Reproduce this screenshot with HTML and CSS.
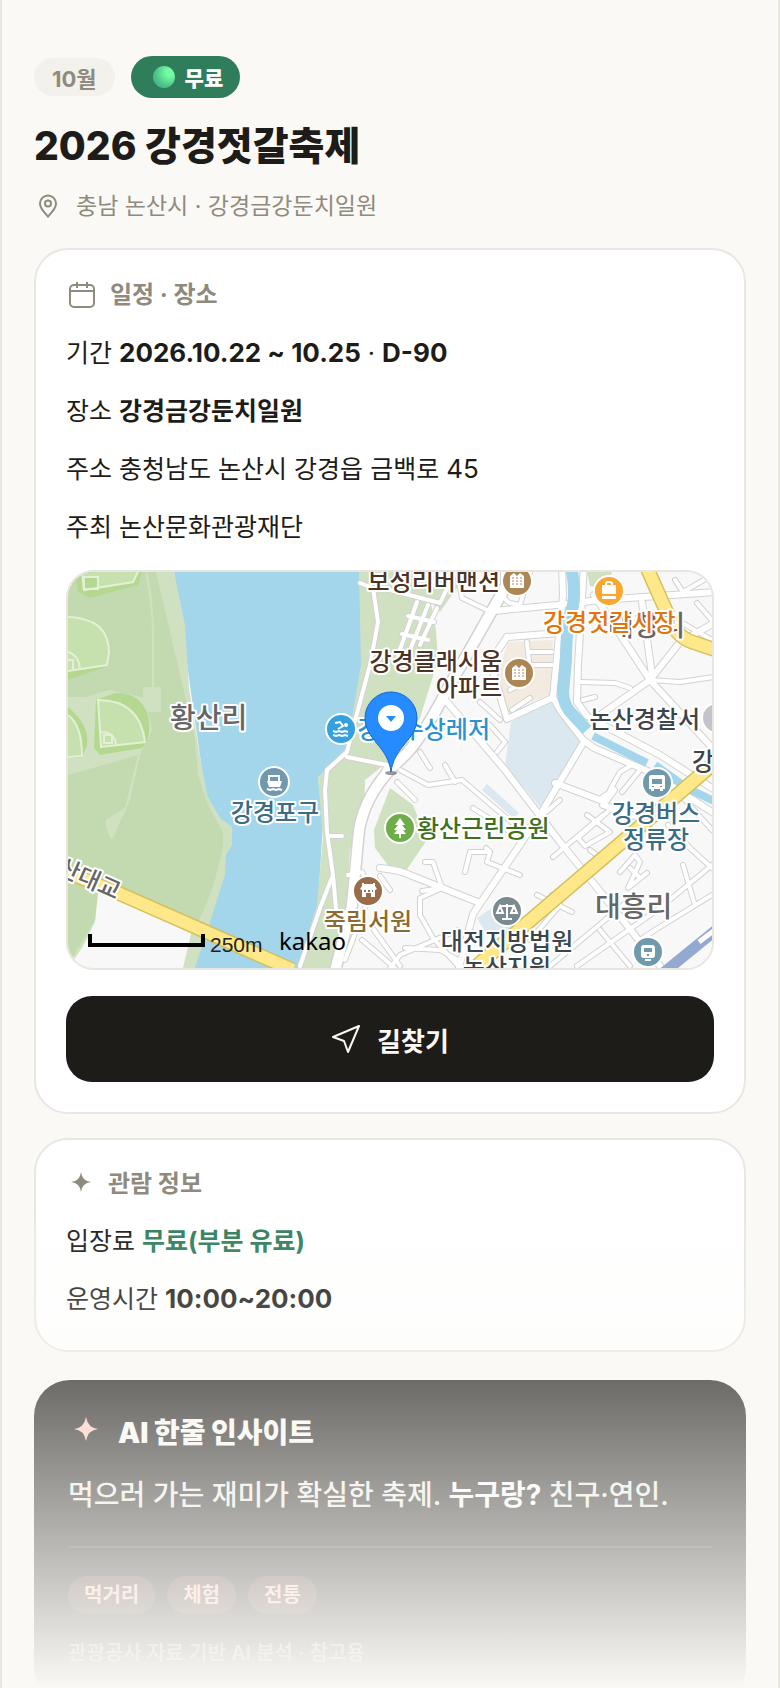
FILE: index.html
```html
<!DOCTYPE html>
<html lang="ko">
<head>
<meta charset="utf-8">
<meta name="viewport" content="width=device-width, initial-scale=1">
<title>2026 강경젓갈축제</title>
<link rel="stylesheet" href="styles.css">
</head>
<body>
<main class="page">
  <header class="intro">
    <div class="tags">
      <span class="tag tag-month">10월</span>
      <span class="tag tag-free"><i class="orb"></i>무료</span>
    </div>
    <h1 class="title">2026 강경젓갈축제</h1>
    <p class="place">
      <svg class="icon-pin" viewBox="0 0 24 24" aria-hidden="true"><path d="M12 22.500C9 19 4 15 4 9.500a8 8 0 0 1 16 0c0 5.500-5 9.500-8 13z"/><circle cx="12" cy="9.500" r="3"/></svg>
      충남 논산시 · 강경금강둔치일원
    </p>
  </header>

  <section class="card">
    <h2 class="card-title">
      <svg class="icon-calendar" viewBox="0 0 30 30" aria-hidden="true"><rect x="4" y="5" width="24" height="22" rx="4"/><path d="M4 11h24M11 2v6M21 2v6"/></svg>
      일정 · 장소
    </h2>
    <p class="row">기간 <b class="num">2026.10.22 ~ 10.25</b> · <b class="num">D-90</b></p>
    <p class="row">장소 <b>강경금강둔치일원</b></p>
    <p class="row">주소 충청남도 논산시 강경읍 금백로 <span class="num">45</span></p>
    <p class="row">주최 논산문화관광재단</p>

    <div class="map">
      <svg class="map-canvas" viewBox="68 572 644 396" preserveAspectRatio="xMidYMid slice" role="img" aria-label="강경금강둔치일원 지도">
        <defs>
          <g id="lanes">
            <path d="M562 565L563 595 553 697 560 710 583 740 594 748 650 772 712 812"/>
            <path d="M584 565L578 665 577 702 587 716 603 725 660 755 715 790"/>
            <path d="M493 611L557 605 600 600 716 592"/>
            <path d="M594 595L650 680 716 752"/>
            <path d="M650 680L680 642 716 622M642 602L652 675M650 680L596 718"/>
            <path d="M447 702L505 770 560 842 603 895 637 938 665 972"/>
            <path d="M582 745L540 815 473 914 458 972"/>
            <path d="M380 868Q400 870 410 875L480 903"/>
            <path d="M507 637L560 633M507 637L490 662 507 719 552 698"/>
            <path d="M555 783L600 800 614 790 603 805 640 818"/>
          </g>
          <g id="alleys">
            <path d="M360 583L373 588 378 622 370 665 353 728 347 752 327 770 325 790 327 832 333 875 337 920"/>
            <path d="M333 875L320 908 300 966M347 757L387 765M329 836H342M387 765L357 830"/>
            <path d="M390 590L440 603 455 572M417 602L398 655M428 605L408 655M437 608L420 645M408 616L434 622M402 634L428 640"/>
            <path d="M457 572L462 598 487 610M503 572V590Q503 600 510 603L520 605 530 572"/>
            <path d="M527 642L530 672M533 665H552M530 652H552M510 690L524 682M480 702L500 720M512 710L530 698"/>
            <path d="M580 682L615 683 630 688M650 680L680 682 714 677M583 700L595 697"/>
            <path d="M683 592L716 573M683 592L675 580M697 603L716 625M712 640L660 610"/>
            <path d="M553 857L603 815M587 815L610 832 585 846 578 838 612 808M590 850L606 862"/>
            <path d="M465 872L470 852 490 852 487 862 520 875M490 852L486 848"/>
            <path d="M425 862L433 862 442 888 422 891M442 888L420 898 420 915 433 938 458 966"/>
            <path d="M390 968L400 955 458 930M405 948L440 950 458 960"/>
            <path d="M397 782L415 800M420 752L430 768M400 770L428 785 462 780 523 832 560 800M473 808L515 835M455 782L445 765"/>
            <path d="M537 895L572 912M560 903L552 895M550 966L635 895M577 966L660 908 712 865"/>
            <path d="M668 825L692 850 712 868M683 865L694 902M600 930L630 966"/>
            <path d="M620 872L635 855 640 862 628 888 647 873M630 868L640 878"/>
            <path d="M610 790L620 772 632 765M622 792L640 770M685 800L712 830"/>
            <path d="M348 875L362 872 366 880M366 905L345 960M380 876L390 890M362 940L395 968M374 930L400 966"/>
            <path d="M640 940L655 930 712 895M530 940L560 905M490 725L505 742 497 752"/>
          </g>
          <path id="main-road" d="M515 570L447 690Q420 742 402 758 366 790 359 830L352 905 334 975"/>
        </defs>

        <rect class="ground" x="68" y="572" width="644" height="396"/>
        <path class="water" d="M174 572H360L364 640 358 700 350 745 330 765 318 778 323 822 318 905 297 968H195L202 770z"/>
        <path class="grass" d="M68 572H174L185 625 189 688 198 745 207 795 220 818 232 827V845L226 855 225 875 210 922 195 968H68z"/>
        <path class="meadow" d="M68 572H156L195 738 198 775 208 805 223 832V848L215 880 208 900 195 930 98 893V915L68 965z"/>
        <path class="ground" d="M98 893L95 922 82 948 68 968H183L192 930z"/>
        <path class="grass" d="M68 697L85 697 110 690 145 698 152 730 140 755 130 800 112 840Q105 830 106 820L125 808 138 755 68 775z"/>
        <path class="grass" d="M143 687H161V712H143z"/>
        <path class="grass" d="M359 572H425L436 630 438 660 420 718 390 760 365 780 364 820 350 850 345 925 338 935 330 968H297L317 905 323 838 318 778 347 747 361 665z"/>
        <path class="grass" d="M390 788L413 805 427 840 405 872 390 868 375 848 374 830z"/>
        <path class="grass" d="M450 572H468L440 612 425 595zM587 572H612L607 588 590 586z"/>
        <path class="field" d="M75 572L78 592 90 598 138 585 142 572zM68 618Q105 612 108 650L106 667 68 680zM68 707Q90 725 87 745L82 758H68zM96 700L115 693Q140 692 148 715 152 740 142 748L100 755 94 748z"/>
        <path class="diamond" d="M82 572L84 590 133 582 138 572M68 617Q108 618 109 652L107 665 68 671M68 715Q82 725 82 756L68 757M98 700Q140 700 145 742L101 747zM101 732Q115 732 116 745M104 735h8v8h-8zM84 577h14v12h-14zM68 652Q79 655 80 670M68 660h5v10"/>
        <path class="track" d="M146 572Q153 600 153 640V687"/>
        <path class="plot" d="M511 722L550 700 583 742 540 807 505 765z"/>
        <path class="plot" d="M487 784L519 813 513 818 482 790zM477 918L493 907 515 928 487 935z"/>
        <path class="estate" d="M508 642L553 640 551 694 507 712 496 680z"/>

        <use class="casing alley" href="#alleys"/>
        <use class="casing lane" href="#lanes"/>
        <use class="casing trunk" href="#main-road"/>
        <use class="alley" href="#alleys"/>
        <use class="lane" href="#lanes"/>
        <use class="trunk" href="#main-road"/>

        <path class="canal" d="M571 566Q576 590 573 605 566 625 566 660L563 692Q563 706 574 716L587 730"/>
        <path class="canal canal-thin" d="M593 736L647 763M655 765L687 788 716 802"/>
        <path class="highway-edge" d="M62 870L118 893 293 970M472 970L718 760M647 568L668 615Q675 636 692 642L716 650"/>
        <path class="highway" d="M62 870L118 893 293 970M472 970L718 760M647 568L668 615Q675 636 692 642L716 650"/>
        <path class="rail" d="M662 974L716 930"/>
        <path class="rail-gap" d="M699 942L716 929"/>

        <g class="poi">
          <circle class="poi-swim" cx="341" cy="729" r="15"/>
          <circle class="poi-transit" cx="274" cy="782" r="15"/>
          <circle class="poi-hanok" cx="368" cy="891" r="15"/>
          <circle class="poi-park" cx="400" cy="828" r="15"/>
          <circle class="poi-court" cx="507" cy="911" r="15"/>
          <circle class="poi-transit" cx="657" cy="783" r="15"/>
          <circle class="poi-transit" cx="648" cy="952" r="15"/>
          <circle class="poi-home" cx="517" cy="581" r="15"/>
          <circle class="poi-home" cx="519" cy="673" r="15"/>
          <circle class="poi-market" cx="609" cy="591" r="15"/>
          <circle class="poi-police" cx="717" cy="718" r="15"/>
        </g>
        <g class="glyph">
          <path d="M510 588V576l4-3 3 3 3-3 4 3v12zM512 680V668l4-3 3 3 3-3 4 3v12z"/>
          <path class="windows-home" d="M512 578h10M512 581h10M512 584h10M514 670h10M514 673h10M514 676h10"/>
          <path d="M602 585h14v9h-14zM602 596h14v3h-14z"/>
          <path class="line" d="M606 585v-1q0-2 2-2h2q2 0 2 2v1"/>
          <circle cx="346" cy="725" r="2"/>
          <path class="line" d="M335 723l5-1 3 4-5 3M333 731l3 1 3-1 3 1 3-1 3 1M333 735l3 1 3-1 3 1 3-1 3 1"/>
          <path d="M267 781h15l-2 6h-11z"/>
          <path class="line" d="M269 781v-5h10v5M272 776h5M267 789l3 1 3-1 3 1 3-1 3 1"/>
          <path d="M360 889l2-3v-3h2v1h9v-1h2v3l2 3-2 1v7h-4v-4h-5v4h-4v-7z"/>
          <path class="door" d="M364 890h2v2h-2zM368 890h2v2h-2zM372 890h1v2h-1z"/>
          <path d="M400 818l5 7h-3l4 5h-3l3 4h-5v4h-2v-4h-5l3-4h-3l4-5h-3z"/>
          <path class="line" d="M507 904v14M502 919h10M500 906h14M500 906l-3 7h6zM514 906l-3 7h6z"/>
          <path d="M651 775h12q2 0 2 2v12h-2v2h-3v-2h-6v2h-3v-2h-2v-12q0-2 2-2z"/>
          <path class="cut" d="M652 779h10v5h-10zM652 786h2v1h-2zM660 786h2v1h-2z"/>
          <path d="M644 945h8q3 0 3 3v7q0 3-3 3h-8q-3 0-3-3v-7q0-3 3-3zM645 959h6v2h-6z"/>
          <path class="cut" d="M644 948h8v4h-8zM647 954h2v2h-2z"/>
        </g>

        <g class="label">
          <text class="label-area" x="170" y="728">황산리</text>
          <text class="label-area" x="595" y="917">대흥리</text>
          <text class="label-area" x="608" y="636">대창리</text>
          <text class="label-home end" x="500" y="590">보성리버맨션</text>
          <text class="label-home end" x="502" y="670">강경클래시움</text>
          <text class="label-home end" x="502" y="696">아파트</text>
          <text class="label-market" x="543" y="631">강경젓갈시장</text>
          <text class="label-swim end" x="490" y="738">강경수상레저</text>
          <text class="label-transit mid" x="275" y="821">강경포구</text>
          <text class="label-park" x="417" y="837">황산근린공원</text>
          <text class="label-hanok mid" x="368" y="930">죽림서원</text>
          <text class="label-office mid" x="507" y="950">대전지방법원</text>
          <text class="label-office mid" x="507" y="976">논산지원</text>
          <text class="label-transit mid" x="656" y="822">강경버스</text>
          <text class="label-transit mid" x="656" y="848">정류장</text>
          <text class="label-office end" x="700" y="728">논산경찰서</text>
          <text class="label-office" x="692" y="770">강경</text>
          <text class="label-bridge end" x="116" y="900" transform="rotate(24 116 900)">황산대교</text>
        </g>

        <ellipse class="pin-shadow" cx="391" cy="773" rx="6" ry="2"/>
        <path class="pin" d="M391 772C388 746 365 740 365 718a26 26 0 0 1 52 0C417 740 394 746 391 772z"/>
        <circle class="pin-hole" cx="391" cy="718" r="13"/>
        <path class="pin-arrow" d="M386 716h10l-5 6z"/>

        <path class="scale" d="M90 934V945H203V934"/>
        <text class="scale-text" x="210" y="952">250m</text>
        <text class="brand" x="279" y="950">kakao</text>
      </svg>
    </div>

    <button class="route" type="button">
      <svg class="icon-route" viewBox="0 0 30 30" aria-hidden="true"><path d="M28 2L2 13l11 4 4 11z"/></svg>
      길찾기
    </button>
  </section>

  <section class="card">
    <h2 class="card-title">
      <svg class="icon-spark" viewBox="0 0 28 28" aria-hidden="true"><path d="M15 2Q16 11 25 12 16 13 15 22 14 13 5 12 14 11 15 2z"/></svg>
      관람 정보
    </h2>
    <p class="row">입장료 <b class="free">무료(부분 유료)</b></p>
    <p class="row">운영시간 <b class="num">10:00~20:00</b></p>
  </section>

  <section class="insight">
    <h2 class="insight-title">
      <svg class="icon-insight" viewBox="0 0 28 28" aria-hidden="true"><path d="M14 0Q16 11 26 12 16 13 14 24 12 13 2 12 12 11 14 0z"/></svg>
      AI 한줄 인사이트
    </h2>
    <p class="insight-text">먹으러 가는 재미가 확실한 축제. <b>누구랑?</b> 친구·연인.</p>
    <ul class="topics">
      <li class="topic">먹거리</li>
      <li class="topic">체험</li>
      <li class="topic">전통</li>
    </ul>
    <p class="source">관광공사 자료 기반 AI 분석 · 참고용</p>
  </section>
  <div class="fade"></div>
</main>
</body>
</html>
```
FILE: styles.css
```css
* { box-sizing: border-box; }

body {
  margin: 0;
  background: #faf9f5;
  color: #1d1c18;
  font-family: Inter, "Noto Sans CJK KR", sans-serif;
}

h1, h2, p, ul { margin: 0; padding: 0; }

.page {
  position: relative;
  height: 100vh;
  overflow: hidden;
  padding: 56px 32px 0;
  border: solid #e9e7e0;
  border-width: 0 2px;
}

/* header */
.tags { display: flex; align-items: center; gap: 16px; }
.tag { display: flex; align-items: center; border-radius: 24px; font-size: 22px; font-weight: 700; }
.tag-month { height: 38px; padding: 0 18px; background: #f2f1ec; color: #8f8a7e; }
.tag-free { height: 42px; gap: 10px; padding: 0 17px 0 22px; background: #2f7d5b; color: #fff; font-size: 21px; font-weight: 900; }
.orb { width: 22px; height: 22px; border-radius: 50%; background: radial-gradient(circle at 75% 30%, #74fca0 15%, #4fc389 60%, #4a9c95 100%); }
.title { margin-top: 20px; font-size: 39px; line-height: 56px; font-weight: 800; }
.place { display: flex; align-items: center; gap: 14px; margin-top: 14px; font-size: 23px; line-height: 36px; color: #8f8a7e; }
.icon-pin { width: 28px; height: 24px; fill: none; stroke: #8f8a7e; stroke-width: 2; }

/* cards */
.card {
  margin-top: 24px;
  padding: 24px 30px 30px;
  border: 2px solid #e9e7e0;
  border-radius: 34px;
  background: #fff;
}
.card-title { display: flex; align-items: center; gap: 14px; min-height: 40px; font-size: 24px; line-height: 40px; font-weight: 700; color: #8f8a7e; }
.icon-calendar { width: 30px; height: 42px; padding: 6px 0; fill: none; stroke: #8f8a7e; stroke-width: 2; }
.icon-spark { width: 28px; height: 28px; fill: #8f8a7e; }
.row { margin-top: 16px; font-size: 25px; line-height: 42px; }
.row b { font-weight: 700; }
.row .num { font-size: 26px; }
.row .free { color: #2f7d5b; }

/* map */
.map { margin-top: 22px; border: 2px solid #e9e5df; border-radius: 28px; overflow: hidden; }
.map-canvas { display: block; width: 100%; height: 396px; }
.ground { fill: #f8f8f8; }
.water { fill: #a3d5eb; }
.grass { fill: #d0e1c2; }
.meadow { fill: #c3dab0; }
.field { fill: #b5d891; }
.diamond { fill: #c6e0ae; stroke: #e4f0d6; stroke-width: 2; }
.track { fill: none; stroke: #d0e1c2; stroke-width: 2; }
.plot { fill: #dce8f0; }
.estate { fill: #f3ebe0; }
.alley, .lane, .trunk { fill: none; stroke: #fff; stroke-linecap: round; stroke-linejoin: round; }
.alley { stroke-width: 4; }
.lane { stroke-width: 6; }
.trunk { stroke-width: 10; }
.casing { stroke: #d2d2d2; }
.casing.alley { stroke-width: 6; }
.casing.lane { stroke-width: 8; }
.casing.trunk { stroke-width: 13; }
.canal { fill: none; stroke: #a3d5eb; stroke-width: 12; }
.canal-thin { stroke-width: 8; }
.highway-edge, .highway { fill: none; stroke: #d4c05c; stroke-width: 15; }
.highway { stroke: #ffe88a; stroke-width: 12; }
.rail { fill: none; stroke: #94a9cf; stroke-width: 11; }
.rail-gap { stroke: #fff; stroke-width: 5; }
.poi { stroke: #fff; stroke-width: 2; }
.poi-swim { fill: #35a0e0; }
.poi-transit { fill: #7099ad; }
.poi-hanok { fill: #9a6c4a; }
.poi-park { fill: #6fad4a; }
.poi-court { fill: #7b8990; }
.poi-home { fill: #ad8655; }
.poi-market { fill: #fba62f; }
.poi-police { fill: #c3c3cb; }
.glyph { fill: #fff; }
.line { fill: none; stroke: #fff; stroke-width: 2; }
.windows-home { fill: none; stroke: #ad8655; stroke-width: 1; stroke-dasharray: 2 2; }
.door { fill: #9a6c4a; }
.cut { fill: #7099ad; }
.label { font-family: "Noto Sans CJK KR", sans-serif; font-size: 24px; font-weight: 500; paint-order: stroke; stroke: #fff; stroke-width: 4; stroke-linejoin: round; }
.end { text-anchor: end; }
.mid { text-anchor: middle; }
.label-area { font-size: 28px; fill: #666; }
.label-home { fill: #4b3426; }
.label-market { fill: #e5730c; }
.label-swim { fill: #2c93d0; }
.label-transit { fill: #396c87; }
.label-park { fill: #3f7020; }
.label-hanok { fill: #8c6a34; }
.label-office { fill: #3b454c; }
.label-bridge { font-size: 24px; fill: #666; }
.pin-shadow { fill: #555; opacity: .6; }
.pin { fill: #258bff; stroke: #1468cf; stroke-width: 1; }
.pin-hole { fill: #fff; }
.pin-arrow { fill: #258bff; }
.scale { fill: none; stroke: #000; stroke-width: 4; }
.scale-text { font-family: "Liberation Sans", sans-serif; font-size: 21px; fill: #222; }
.brand { font-family: "Noto Sans", sans-serif; font-size: 24px; font-weight: 400; fill: #000; }

.route {
  display: flex;
  align-items: center;
  justify-content: center;
  gap: 16px;
  width: 100%;
  height: 86px;
  margin-top: 26px;
  border: 0;
  border-radius: 26px;
  background: #1d1c18;
  color: #faf9f5;
  font: 700 26px Inter, "Noto Sans CJK KR", sans-serif;
}
.icon-route { width: 30px; height: 30px; fill: none; stroke: #faf9f5; stroke-width: 2; stroke-linejoin: round; }

/* insight */
.insight { margin-top: 28px; padding: 28px 34px 34px; border-radius: 36px; background: #1d1c18; color: #f0eee6; }
.insight-title { display: flex; align-items: center; gap: 18px; height: 46px; padding-left: 4px; font-size: 28px; font-weight: 900; color: #faf9f5; }
.icon-insight { width: 28px; height: 28px; fill: #ffc9bc; }
.insight-text { margin-top: 16px; padding-bottom: 26px; border-bottom: 2px solid #37362f; font-size: 28px; line-height: 50px; font-weight: 500; }
.insight-text b { font-weight: 700; color: #fff; }
.topics { display: flex; gap: 12px; margin-top: 28px; list-style: none; }
.topic { height: 38px; padding: 0 16px; border-radius: 20px; background: #4b342e; color: #ffc9bc; font-size: 20px; line-height: 38px; font-weight: 700; }
.source { margin-top: 22px; font-size: 20px; line-height: 34px; font-weight: 500; color: #a3a096; }

.fade { position: absolute; right: 0; bottom: 0; left: 0; height: 480px; background: linear-gradient(rgba(250, 249, 245, 0), #faf9f5); pointer-events: none; }
```
